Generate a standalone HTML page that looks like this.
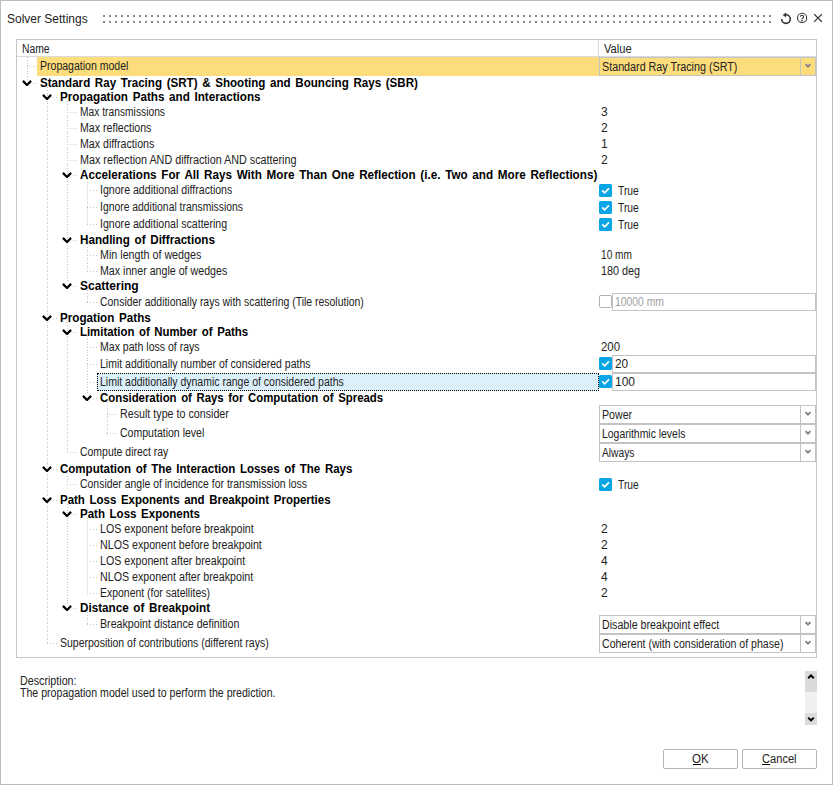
<!DOCTYPE html>
<html><head><meta charset="utf-8"><style>
html,body{margin:0;padding:0;}
body{width:833px;height:785px;position:relative;overflow:hidden;background:#fff;font-family:"Liberation Sans",sans-serif;font-size:12px;}
.tx{position:absolute;white-space:nowrap;line-height:16px;height:16px;transform-origin:0 0;}
.ab{position:absolute;}
.vd{position:absolute;width:1px;background-image:repeating-linear-gradient(to bottom,#c4c4c4 0,#c4c4c4 1px,transparent 1px,transparent 3px,#c4c4c4 3px,#c4c4c4 4px,transparent 4px,transparent 6px,#c4c4c4 6px,#c4c4c4 7px,transparent 7px,transparent 8px);}
.hd{position:absolute;height:1px;background-image:repeating-linear-gradient(to right,#c4c4c4 0,#c4c4c4 1px,transparent 1px,transparent 3px);}
.combo{position:absolute;box-sizing:border-box;border:1px solid #c3c3c3;background:#fff;}
.tb{position:absolute;box-sizing:border-box;border:1px solid #c3c3c3;background:#fff;}
.cb{position:absolute;width:13px;height:13px;box-sizing:border-box;border-radius:1.5px;}
.cbon{background:#0aa5e5;}
.cboff{border:1px solid #a9b0b8;background:#fff;}
.btn{position:absolute;box-sizing:border-box;border:1px solid #b4b4b4;border-radius:2px;background:#fff;}
</style></head><body>
<div class="ab" style="left:0;top:0;width:833px;height:785px;box-sizing:border-box;border:1px solid #bdbdbd;"></div>
<div class="tx" id="t0" style="left:7px;top:11px;color:#222;">Solver Settings</div>
<svg class="ab" style="left:0;top:0" width="833" height="40" fill="#8a8a8a"><rect x="103" y="15" width="2" height="2"/><rect x="103" y="21" width="2" height="2"/><rect x="109" y="15" width="2" height="2"/><rect x="109" y="21" width="2" height="2"/><rect x="115" y="15" width="2" height="2"/><rect x="115" y="21" width="2" height="2"/><rect x="121" y="15" width="2" height="2"/><rect x="121" y="21" width="2" height="2"/><rect x="127" y="15" width="2" height="2"/><rect x="127" y="21" width="2" height="2"/><rect x="133" y="15" width="2" height="2"/><rect x="133" y="21" width="2" height="2"/><rect x="139" y="15" width="2" height="2"/><rect x="139" y="21" width="2" height="2"/><rect x="145" y="15" width="2" height="2"/><rect x="145" y="21" width="2" height="2"/><rect x="151" y="15" width="2" height="2"/><rect x="151" y="21" width="2" height="2"/><rect x="157" y="15" width="2" height="2"/><rect x="157" y="21" width="2" height="2"/><rect x="163" y="15" width="2" height="2"/><rect x="163" y="21" width="2" height="2"/><rect x="169" y="15" width="2" height="2"/><rect x="169" y="21" width="2" height="2"/><rect x="175" y="15" width="2" height="2"/><rect x="175" y="21" width="2" height="2"/><rect x="181" y="15" width="2" height="2"/><rect x="181" y="21" width="2" height="2"/><rect x="187" y="15" width="2" height="2"/><rect x="187" y="21" width="2" height="2"/><rect x="193" y="15" width="2" height="2"/><rect x="193" y="21" width="2" height="2"/><rect x="199" y="15" width="2" height="2"/><rect x="199" y="21" width="2" height="2"/><rect x="205" y="15" width="2" height="2"/><rect x="205" y="21" width="2" height="2"/><rect x="211" y="15" width="2" height="2"/><rect x="211" y="21" width="2" height="2"/><rect x="217" y="15" width="2" height="2"/><rect x="217" y="21" width="2" height="2"/><rect x="223" y="15" width="2" height="2"/><rect x="223" y="21" width="2" height="2"/><rect x="229" y="15" width="2" height="2"/><rect x="229" y="21" width="2" height="2"/><rect x="235" y="15" width="2" height="2"/><rect x="235" y="21" width="2" height="2"/><rect x="241" y="15" width="2" height="2"/><rect x="241" y="21" width="2" height="2"/><rect x="247" y="15" width="2" height="2"/><rect x="247" y="21" width="2" height="2"/><rect x="253" y="15" width="2" height="2"/><rect x="253" y="21" width="2" height="2"/><rect x="259" y="15" width="2" height="2"/><rect x="259" y="21" width="2" height="2"/><rect x="265" y="15" width="2" height="2"/><rect x="265" y="21" width="2" height="2"/><rect x="271" y="15" width="2" height="2"/><rect x="271" y="21" width="2" height="2"/><rect x="277" y="15" width="2" height="2"/><rect x="277" y="21" width="2" height="2"/><rect x="283" y="15" width="2" height="2"/><rect x="283" y="21" width="2" height="2"/><rect x="289" y="15" width="2" height="2"/><rect x="289" y="21" width="2" height="2"/><rect x="295" y="15" width="2" height="2"/><rect x="295" y="21" width="2" height="2"/><rect x="301" y="15" width="2" height="2"/><rect x="301" y="21" width="2" height="2"/><rect x="307" y="15" width="2" height="2"/><rect x="307" y="21" width="2" height="2"/><rect x="313" y="15" width="2" height="2"/><rect x="313" y="21" width="2" height="2"/><rect x="319" y="15" width="2" height="2"/><rect x="319" y="21" width="2" height="2"/><rect x="325" y="15" width="2" height="2"/><rect x="325" y="21" width="2" height="2"/><rect x="331" y="15" width="2" height="2"/><rect x="331" y="21" width="2" height="2"/><rect x="337" y="15" width="2" height="2"/><rect x="337" y="21" width="2" height="2"/><rect x="343" y="15" width="2" height="2"/><rect x="343" y="21" width="2" height="2"/><rect x="349" y="15" width="2" height="2"/><rect x="349" y="21" width="2" height="2"/><rect x="355" y="15" width="2" height="2"/><rect x="355" y="21" width="2" height="2"/><rect x="361" y="15" width="2" height="2"/><rect x="361" y="21" width="2" height="2"/><rect x="367" y="15" width="2" height="2"/><rect x="367" y="21" width="2" height="2"/><rect x="373" y="15" width="2" height="2"/><rect x="373" y="21" width="2" height="2"/><rect x="379" y="15" width="2" height="2"/><rect x="379" y="21" width="2" height="2"/><rect x="385" y="15" width="2" height="2"/><rect x="385" y="21" width="2" height="2"/><rect x="391" y="15" width="2" height="2"/><rect x="391" y="21" width="2" height="2"/><rect x="397" y="15" width="2" height="2"/><rect x="397" y="21" width="2" height="2"/><rect x="403" y="15" width="2" height="2"/><rect x="403" y="21" width="2" height="2"/><rect x="409" y="15" width="2" height="2"/><rect x="409" y="21" width="2" height="2"/><rect x="415" y="15" width="2" height="2"/><rect x="415" y="21" width="2" height="2"/><rect x="421" y="15" width="2" height="2"/><rect x="421" y="21" width="2" height="2"/><rect x="427" y="15" width="2" height="2"/><rect x="427" y="21" width="2" height="2"/><rect x="433" y="15" width="2" height="2"/><rect x="433" y="21" width="2" height="2"/><rect x="439" y="15" width="2" height="2"/><rect x="439" y="21" width="2" height="2"/><rect x="445" y="15" width="2" height="2"/><rect x="445" y="21" width="2" height="2"/><rect x="451" y="15" width="2" height="2"/><rect x="451" y="21" width="2" height="2"/><rect x="457" y="15" width="2" height="2"/><rect x="457" y="21" width="2" height="2"/><rect x="463" y="15" width="2" height="2"/><rect x="463" y="21" width="2" height="2"/><rect x="469" y="15" width="2" height="2"/><rect x="469" y="21" width="2" height="2"/><rect x="475" y="15" width="2" height="2"/><rect x="475" y="21" width="2" height="2"/><rect x="481" y="15" width="2" height="2"/><rect x="481" y="21" width="2" height="2"/><rect x="487" y="15" width="2" height="2"/><rect x="487" y="21" width="2" height="2"/><rect x="493" y="15" width="2" height="2"/><rect x="493" y="21" width="2" height="2"/><rect x="499" y="15" width="2" height="2"/><rect x="499" y="21" width="2" height="2"/><rect x="505" y="15" width="2" height="2"/><rect x="505" y="21" width="2" height="2"/><rect x="511" y="15" width="2" height="2"/><rect x="511" y="21" width="2" height="2"/><rect x="517" y="15" width="2" height="2"/><rect x="517" y="21" width="2" height="2"/><rect x="523" y="15" width="2" height="2"/><rect x="523" y="21" width="2" height="2"/><rect x="529" y="15" width="2" height="2"/><rect x="529" y="21" width="2" height="2"/><rect x="535" y="15" width="2" height="2"/><rect x="535" y="21" width="2" height="2"/><rect x="541" y="15" width="2" height="2"/><rect x="541" y="21" width="2" height="2"/><rect x="547" y="15" width="2" height="2"/><rect x="547" y="21" width="2" height="2"/><rect x="553" y="15" width="2" height="2"/><rect x="553" y="21" width="2" height="2"/><rect x="559" y="15" width="2" height="2"/><rect x="559" y="21" width="2" height="2"/><rect x="565" y="15" width="2" height="2"/><rect x="565" y="21" width="2" height="2"/><rect x="571" y="15" width="2" height="2"/><rect x="571" y="21" width="2" height="2"/><rect x="577" y="15" width="2" height="2"/><rect x="577" y="21" width="2" height="2"/><rect x="583" y="15" width="2" height="2"/><rect x="583" y="21" width="2" height="2"/><rect x="589" y="15" width="2" height="2"/><rect x="589" y="21" width="2" height="2"/><rect x="595" y="15" width="2" height="2"/><rect x="595" y="21" width="2" height="2"/><rect x="601" y="15" width="2" height="2"/><rect x="601" y="21" width="2" height="2"/><rect x="607" y="15" width="2" height="2"/><rect x="607" y="21" width="2" height="2"/><rect x="613" y="15" width="2" height="2"/><rect x="613" y="21" width="2" height="2"/><rect x="619" y="15" width="2" height="2"/><rect x="619" y="21" width="2" height="2"/><rect x="625" y="15" width="2" height="2"/><rect x="625" y="21" width="2" height="2"/><rect x="631" y="15" width="2" height="2"/><rect x="631" y="21" width="2" height="2"/><rect x="637" y="15" width="2" height="2"/><rect x="637" y="21" width="2" height="2"/><rect x="643" y="15" width="2" height="2"/><rect x="643" y="21" width="2" height="2"/><rect x="649" y="15" width="2" height="2"/><rect x="649" y="21" width="2" height="2"/><rect x="655" y="15" width="2" height="2"/><rect x="655" y="21" width="2" height="2"/><rect x="661" y="15" width="2" height="2"/><rect x="661" y="21" width="2" height="2"/><rect x="667" y="15" width="2" height="2"/><rect x="667" y="21" width="2" height="2"/><rect x="673" y="15" width="2" height="2"/><rect x="673" y="21" width="2" height="2"/><rect x="679" y="15" width="2" height="2"/><rect x="679" y="21" width="2" height="2"/><rect x="685" y="15" width="2" height="2"/><rect x="685" y="21" width="2" height="2"/><rect x="691" y="15" width="2" height="2"/><rect x="691" y="21" width="2" height="2"/><rect x="697" y="15" width="2" height="2"/><rect x="697" y="21" width="2" height="2"/><rect x="703" y="15" width="2" height="2"/><rect x="703" y="21" width="2" height="2"/><rect x="709" y="15" width="2" height="2"/><rect x="709" y="21" width="2" height="2"/><rect x="715" y="15" width="2" height="2"/><rect x="715" y="21" width="2" height="2"/><rect x="721" y="15" width="2" height="2"/><rect x="721" y="21" width="2" height="2"/><rect x="727" y="15" width="2" height="2"/><rect x="727" y="21" width="2" height="2"/><rect x="733" y="15" width="2" height="2"/><rect x="733" y="21" width="2" height="2"/><rect x="739" y="15" width="2" height="2"/><rect x="739" y="21" width="2" height="2"/><rect x="745" y="15" width="2" height="2"/><rect x="745" y="21" width="2" height="2"/><rect x="751" y="15" width="2" height="2"/><rect x="751" y="21" width="2" height="2"/><rect x="757" y="15" width="2" height="2"/><rect x="757" y="21" width="2" height="2"/><rect x="763" y="15" width="2" height="2"/><rect x="763" y="21" width="2" height="2"/><rect x="769" y="15" width="2" height="2"/><rect x="769" y="21" width="2" height="2"/></svg>
<svg class="ab" style="left:776px;top:8px" width="52" height="22" viewBox="0 0 52 22">
<path d="M10 6.8 A4.3 4.3 0 1 1 5.7 11.1" fill="none" stroke="#333" stroke-width="1.6"/>
<path d="M6.6 6.9 L10.1 4.4 L10.1 9.3 Z" fill="#333"/>
<circle cx="26.1" cy="9.9" r="4.6" fill="none" stroke="#333" stroke-width="1.05"/>
<path d="M24.3 8.6 Q24.5 7.3 25.9 7.3 Q27.6 7.3 27.6 8.8 Q27.6 9.8 26.4 10.4 Q26 10.7 26 11.2" fill="none" stroke="#333" stroke-width="1.1"/>
<rect x="25.2" y="12.1" width="1.7" height="1.1" fill="#333"/>
<path d="M38.5 6.5 L45.5 13.5 M45.5 6.5 L38.5 13.5" stroke="#333" stroke-width="1.15" stroke-linecap="square"/>
</svg>
<div class="ab" style="left:16px;top:39px;width:801px;height:619px;box-sizing:border-box;border:1px solid #c6c6c6;"></div>
<div class="ab" style="left:17px;top:56px;width:799px;height:1px;background:#dadada;"></div>
<div class="ab" style="left:598px;top:40px;width:1px;height:16px;background:#dadada;"></div>
<div class="tx" id="t1" style="left:22px;top:41px;transform:scaleX(0.8586);color:#222;">Name</div>
<div class="tx" id="t2" style="left:604px;top:41px;transform:scaleX(0.9254);color:#222;">Value</div>
<div class="vd" style="left:27px;top:57px;height:23px;"></div>
<div class="vd" style="left:47px;top:87px;height:557px;"></div>
<div class="vd" style="left:67px;top:101px;height:182px;"></div>
<div class="vd" style="left:87px;top:179px;height:46px;"></div>
<div class="vd" style="left:87px;top:244px;height:28px;"></div>
<div class="vd" style="left:87px;top:290px;height:13px;"></div>
<div class="vd" style="left:67px;top:322px;height:131px;"></div>
<div class="vd" style="left:87px;top:336px;height:59px;"></div>
<div class="vd" style="left:107px;top:402px;height:32px;"></div>
<div class="vd" style="left:67px;top:473px;height:12px;"></div>
<div class="vd" style="left:67px;top:504px;height:101px;"></div>
<div class="vd" style="left:87px;top:518px;height:76px;"></div>
<div class="vd" style="left:87px;top:612px;height:13px;"></div>
<div class="hd" style="left:27px;top:66px;width:10px;"></div>
<div class="ab" style="left:37px;top:57px;width:779px;height:19px;background:#fddc7c;"></div>
<div class="tx" id="t3" style="left:40px;top:58px;transform:scaleX(0.8777);color:#222;">Propagation model</div>
<div class="combo" style="left:599px;top:57px;width:217px;height:19px;background:#fddc7c;"></div>
<div class="ab" style="left:800px;top:58px;width:1px;height:17px;background:#c3c3c3;"></div>
<svg class="ab" style="left:804px;top:63px" width="8" height="6"><path d="M1.5 1.2 L4 3.7 L6.5 1.2" fill="none" stroke="#808080" stroke-width="1.8"/></svg>
<div class="tx" id="t4" style="left:602px;top:59px;transform:scaleX(0.8953);color:#222;">Standard Ray Tracing (SRT)</div>
<svg class="ab" style="left:22px;top:80px" width="10" height="6"><path d="M0.9 0.9 L5 5 L9.1 0.9" fill="none" stroke="#000" stroke-width="2.2"/></svg>
<div class="hd" style="left:33px;top:83px;width:4px;"></div>
<div class="tx" id="t5" style="left:40px;top:75px;font-weight:bold;transform:scaleX(0.9653);word-spacing:1.5px;color:#000;">Standard Ray Tracing (SRT) &amp; Shooting and Bouncing Rays (SBR)</div>
<svg class="ab" style="left:42px;top:94px" width="10" height="6"><path d="M0.9 0.9 L5 5 L9.1 0.9" fill="none" stroke="#000" stroke-width="2.2"/></svg>
<div class="hd" style="left:53px;top:97px;width:4px;"></div>
<div class="tx" id="t6" style="left:60px;top:89px;font-weight:bold;transform:scaleX(0.9711);word-spacing:1.5px;color:#000;">Propagation Paths and Interactions</div>
<div class="hd" style="left:67px;top:112px;width:10px;"></div>
<div class="tx" id="t7" style="left:80px;top:104px;transform:scaleX(0.8553);color:#222;">Max transmissions</div>
<div class="tx" id="t8" style="left:601px;top:104px;color:#222;">3</div>
<div class="hd" style="left:67px;top:128px;width:10px;"></div>
<div class="tx" id="t9" style="left:80px;top:120px;transform:scaleX(0.8851);color:#222;">Max reflections</div>
<div class="tx" id="t10" style="left:601px;top:120px;color:#222;">2</div>
<div class="hd" style="left:67px;top:144px;width:10px;"></div>
<div class="tx" id="t11" style="left:80px;top:136px;transform:scaleX(0.8869);color:#222;">Max diffractions</div>
<div class="tx" id="t12" style="left:601px;top:136px;color:#222;">1</div>
<div class="hd" style="left:67px;top:160px;width:10px;"></div>
<div class="tx" id="t13" style="left:80px;top:152px;transform:scaleX(0.8973);color:#222;">Max reflection AND diffraction AND scattering</div>
<div class="tx" id="t14" style="left:601px;top:152px;color:#222;">2</div>
<svg class="ab" style="left:62px;top:172px" width="10" height="6"><path d="M0.9 0.9 L5 5 L9.1 0.9" fill="none" stroke="#000" stroke-width="2.2"/></svg>
<div class="hd" style="left:73px;top:175px;width:4px;"></div>
<div class="tx" id="t15" style="left:80px;top:167px;font-weight:bold;transform:scaleX(0.9733);word-spacing:1.5px;color:#000;">Accelerations For All Rays With More Than One Reflection (i.e. Two and More Reflections)</div>
<div class="hd" style="left:87px;top:190px;width:10px;"></div>
<div class="tx" id="t16" style="left:100px;top:182px;transform:scaleX(0.8828);color:#222;">Ignore additional diffractions</div>
<div class="cb cbon" style="left:599px;top:184px;"><svg width="13" height="13" style="position:absolute;left:0;top:0"><path d="M3.2 6.4 L5.6 8.8 L10 4.4" fill="none" stroke="#fff" stroke-width="1.7"/></svg></div>
<div class="tx" id="t17" style="left:618px;top:183px;transform:scaleX(0.8577);color:#222;">True</div>
<div class="hd" style="left:87px;top:207px;width:10px;"></div>
<div class="tx" id="t18" style="left:100px;top:199px;transform:scaleX(0.8644);color:#222;">Ignore additional transmissions</div>
<div class="cb cbon" style="left:599px;top:201px;"><svg width="13" height="13" style="position:absolute;left:0;top:0"><path d="M3.2 6.4 L5.6 8.8 L10 4.4" fill="none" stroke="#fff" stroke-width="1.7"/></svg></div>
<div class="tx" id="t19" style="left:618px;top:200px;transform:scaleX(0.8577);color:#222;">True</div>
<div class="hd" style="left:87px;top:224px;width:10px;"></div>
<div class="tx" id="t20" style="left:100px;top:216px;transform:scaleX(0.8822);color:#222;">Ignore additional scattering</div>
<div class="cb cbon" style="left:599px;top:218px;"><svg width="13" height="13" style="position:absolute;left:0;top:0"><path d="M3.2 6.4 L5.6 8.8 L10 4.4" fill="none" stroke="#fff" stroke-width="1.7"/></svg></div>
<div class="tx" id="t21" style="left:618px;top:217px;transform:scaleX(0.8577);color:#222;">True</div>
<svg class="ab" style="left:62px;top:237px" width="10" height="6"><path d="M0.9 0.9 L5 5 L9.1 0.9" fill="none" stroke="#000" stroke-width="2.2"/></svg>
<div class="hd" style="left:73px;top:240px;width:4px;"></div>
<div class="tx" id="t22" style="left:80px;top:232px;font-weight:bold;transform:scaleX(0.9709);word-spacing:1.5px;color:#000;">Handling of Diffractions</div>
<div class="hd" style="left:87px;top:255px;width:10px;"></div>
<div class="tx" id="t23" style="left:100px;top:247px;transform:scaleX(0.8936);color:#222;">Min length of wedges</div>
<div class="tx" id="t24" style="left:601px;top:247px;transform:scaleX(0.8440);color:#222;">10 mm</div>
<div class="hd" style="left:87px;top:271px;width:10px;"></div>
<div class="tx" id="t25" style="left:100px;top:263px;transform:scaleX(0.8871);color:#222;">Max inner angle of wedges</div>
<div class="tx" id="t26" style="left:601px;top:263px;transform:scaleX(0.9023);color:#222;">180 deg</div>
<svg class="ab" style="left:62px;top:283px" width="10" height="6"><path d="M0.9 0.9 L5 5 L9.1 0.9" fill="none" stroke="#000" stroke-width="2.2"/></svg>
<div class="hd" style="left:73px;top:286px;width:4px;"></div>
<div class="tx" id="t27" style="left:80px;top:278px;font-weight:bold;transform:scaleX(1.0002);word-spacing:1.5px;color:#000;">Scattering</div>
<div class="hd" style="left:87px;top:302px;width:10px;"></div>
<div class="tx" id="t28" style="left:100px;top:294px;transform:scaleX(0.8706);color:#222;">Consider additionally rays with scattering (Tile resolution)</div>
<div class="tb" style="left:612px;top:293px;width:204px;height:18px;"></div>
<div class="cb cboff" style="left:599px;top:295px;"></div>
<div class="tx" id="t29" style="left:615px;top:294px;transform:scaleX(0.8641);color:#a0a0a0;">10000 mm</div>
<svg class="ab" style="left:42px;top:315px" width="10" height="6"><path d="M0.9 0.9 L5 5 L9.1 0.9" fill="none" stroke="#000" stroke-width="2.2"/></svg>
<div class="hd" style="left:53px;top:318px;width:4px;"></div>
<div class="tx" id="t30" style="left:60px;top:310px;font-weight:bold;transform:scaleX(0.9705);word-spacing:1.5px;color:#000;">Progation Paths</div>
<svg class="ab" style="left:62px;top:329px" width="10" height="6"><path d="M0.9 0.9 L5 5 L9.1 0.9" fill="none" stroke="#000" stroke-width="2.2"/></svg>
<div class="hd" style="left:73px;top:332px;width:4px;"></div>
<div class="tx" id="t31" style="left:80px;top:324px;font-weight:bold;transform:scaleX(0.9480);word-spacing:1.5px;color:#000;">Limitation of Number of Paths</div>
<div class="hd" style="left:87px;top:347px;width:10px;"></div>
<div class="tx" id="t32" style="left:100px;top:339px;transform:scaleX(0.8785);color:#222;">Max path loss of rays</div>
<div class="tx" id="t33" style="left:601px;top:339px;transform:scaleX(0.9551);color:#222;">200</div>
<div class="hd" style="left:87px;top:364px;width:10px;"></div>
<div class="tx" id="t34" style="left:100px;top:356px;transform:scaleX(0.8742);color:#222;">Limit additionally number of considered paths</div>
<div class="tb" style="left:612px;top:355px;width:204px;height:18px;"></div>
<div class="cb cbon" style="left:599px;top:357px;"><svg width="13" height="13" style="position:absolute;left:0;top:0"><path d="M3.2 6.4 L5.6 8.8 L10 4.4" fill="none" stroke="#fff" stroke-width="1.7"/></svg></div>
<div class="tx" id="t35" style="left:615px;top:356px;transform:scaleX(0.9866);color:#222;">20</div>
<div class="hd" style="left:87px;top:382px;width:10px;"></div>
<div class="ab" style="left:97px;top:373px;width:502px;height:18px;box-sizing:border-box;background:#dcf0fb;border:1px dotted #000;"></div>
<div class="tx" id="t36" style="left:100px;top:374px;transform:scaleX(0.8741);color:#222;">Limit additionally dynamic range of considered paths</div>
<div class="tb" style="left:612px;top:373px;width:204px;height:18px;"></div>
<div class="cb cbon" style="left:599px;top:375px;"><svg width="13" height="13" style="position:absolute;left:0;top:0"><path d="M3.2 6.4 L5.6 8.8 L10 4.4" fill="none" stroke="#fff" stroke-width="1.7"/></svg></div>
<div class="tx" id="t37" style="left:615px;top:374px;color:#222;">100</div>
<svg class="ab" style="left:82px;top:395px" width="10" height="6"><path d="M0.9 0.9 L5 5 L9.1 0.9" fill="none" stroke="#000" stroke-width="2.2"/></svg>
<div class="hd" style="left:93px;top:398px;width:4px;"></div>
<div class="tx" id="t38" style="left:100px;top:390px;font-weight:bold;transform:scaleX(0.9489);word-spacing:1.5px;color:#000;">Consideration of Rays for Computation of Spreads</div>
<div class="hd" style="left:107px;top:414px;width:10px;"></div>
<div class="tx" id="t39" style="left:120px;top:406px;transform:scaleX(0.8917);color:#222;">Result type to consider</div>
<div class="combo" style="left:599px;top:405px;width:217px;height:19px;background:#fff;"></div>
<div class="ab" style="left:800px;top:406px;width:1px;height:17px;background:#c3c3c3;"></div>
<svg class="ab" style="left:804px;top:411px" width="8" height="6"><path d="M1.5 1.2 L4 3.7 L6.5 1.2" fill="none" stroke="#808080" stroke-width="1.8"/></svg>
<div class="tx" id="t40" style="left:602px;top:407px;transform:scaleX(0.8857);color:#222;">Power</div>
<div class="hd" style="left:107px;top:433px;width:10px;"></div>
<div class="tx" id="t41" style="left:120px;top:425px;transform:scaleX(0.8777);color:#222;">Computation level</div>
<div class="combo" style="left:599px;top:424px;width:217px;height:19px;background:#fff;"></div>
<div class="ab" style="left:800px;top:425px;width:1px;height:17px;background:#c3c3c3;"></div>
<svg class="ab" style="left:804px;top:430px" width="8" height="6"><path d="M1.5 1.2 L4 3.7 L6.5 1.2" fill="none" stroke="#808080" stroke-width="1.8"/></svg>
<div class="tx" id="t42" style="left:602px;top:426px;transform:scaleX(0.8684);color:#222;">Logarithmic levels</div>
<div class="hd" style="left:67px;top:452px;width:10px;"></div>
<div class="tx" id="t43" style="left:80px;top:444px;transform:scaleX(0.8711);color:#222;">Compute direct ray</div>
<div class="combo" style="left:599px;top:443px;width:217px;height:19px;background:#fff;"></div>
<div class="ab" style="left:800px;top:444px;width:1px;height:17px;background:#c3c3c3;"></div>
<svg class="ab" style="left:804px;top:449px" width="8" height="6"><path d="M1.5 1.2 L4 3.7 L6.5 1.2" fill="none" stroke="#808080" stroke-width="1.8"/></svg>
<div class="tx" id="t44" style="left:602px;top:445px;transform:scaleX(0.8517);color:#222;">Always</div>
<svg class="ab" style="left:42px;top:466px" width="10" height="6"><path d="M0.9 0.9 L5 5 L9.1 0.9" fill="none" stroke="#000" stroke-width="2.2"/></svg>
<div class="hd" style="left:53px;top:469px;width:4px;"></div>
<div class="tx" id="t45" style="left:60px;top:461px;font-weight:bold;transform:scaleX(0.9603);word-spacing:1.5px;color:#000;">Computation of The Interaction Losses of The Rays</div>
<div class="hd" style="left:67px;top:484px;width:10px;"></div>
<div class="tx" id="t46" style="left:80px;top:476px;transform:scaleX(0.8704);color:#222;">Consider angle of incidence for transmission loss</div>
<div class="cb cbon" style="left:599px;top:478px;"><svg width="13" height="13" style="position:absolute;left:0;top:0"><path d="M3.2 6.4 L5.6 8.8 L10 4.4" fill="none" stroke="#fff" stroke-width="1.7"/></svg></div>
<div class="tx" id="t47" style="left:618px;top:477px;transform:scaleX(0.8577);color:#222;">True</div>
<svg class="ab" style="left:42px;top:497px" width="10" height="6"><path d="M0.9 0.9 L5 5 L9.1 0.9" fill="none" stroke="#000" stroke-width="2.2"/></svg>
<div class="hd" style="left:53px;top:500px;width:4px;"></div>
<div class="tx" id="t48" style="left:60px;top:492px;font-weight:bold;transform:scaleX(0.9563);word-spacing:1.5px;color:#000;">Path Loss Exponents and Breakpoint Properties</div>
<svg class="ab" style="left:62px;top:511px" width="10" height="6"><path d="M0.9 0.9 L5 5 L9.1 0.9" fill="none" stroke="#000" stroke-width="2.2"/></svg>
<div class="hd" style="left:73px;top:514px;width:4px;"></div>
<div class="tx" id="t49" style="left:80px;top:506px;font-weight:bold;transform:scaleX(0.9593);word-spacing:1.5px;color:#000;">Path Loss Exponents</div>
<div class="hd" style="left:87px;top:529px;width:10px;"></div>
<div class="tx" id="t50" style="left:100px;top:521px;transform:scaleX(0.8862);color:#222;">LOS exponent before breakpoint</div>
<div class="tx" id="t51" style="left:601px;top:521px;color:#222;">2</div>
<div class="hd" style="left:87px;top:545px;width:10px;"></div>
<div class="tx" id="t52" style="left:100px;top:537px;transform:scaleX(0.8886);color:#222;">NLOS exponent before breakpoint</div>
<div class="tx" id="t53" style="left:601px;top:537px;color:#222;">2</div>
<div class="hd" style="left:87px;top:561px;width:10px;"></div>
<div class="tx" id="t54" style="left:100px;top:553px;transform:scaleX(0.8879);color:#222;">LOS exponent after breakpoint</div>
<div class="tx" id="t55" style="left:601px;top:553px;color:#222;">4</div>
<div class="hd" style="left:87px;top:577px;width:10px;"></div>
<div class="tx" id="t56" style="left:100px;top:569px;transform:scaleX(0.8903);color:#222;">NLOS exponent after breakpoint</div>
<div class="tx" id="t57" style="left:601px;top:569px;color:#222;">4</div>
<div class="hd" style="left:87px;top:593px;width:10px;"></div>
<div class="tx" id="t58" style="left:100px;top:585px;transform:scaleX(0.8719);color:#222;">Exponent (for satellites)</div>
<div class="tx" id="t59" style="left:601px;top:585px;color:#222;">2</div>
<svg class="ab" style="left:62px;top:605px" width="10" height="6"><path d="M0.9 0.9 L5 5 L9.1 0.9" fill="none" stroke="#000" stroke-width="2.2"/></svg>
<div class="hd" style="left:73px;top:608px;width:4px;"></div>
<div class="tx" id="t60" style="left:80px;top:600px;font-weight:bold;transform:scaleX(0.9727);word-spacing:1.5px;color:#000;">Distance of Breakpoint</div>
<div class="hd" style="left:87px;top:624px;width:10px;"></div>
<div class="tx" id="t61" style="left:100px;top:616px;transform:scaleX(0.8887);color:#222;">Breakpoint distance definition</div>
<div class="combo" style="left:599px;top:615px;width:217px;height:19px;background:#fff;"></div>
<div class="ab" style="left:800px;top:616px;width:1px;height:17px;background:#c3c3c3;"></div>
<svg class="ab" style="left:804px;top:621px" width="8" height="6"><path d="M1.5 1.2 L4 3.7 L6.5 1.2" fill="none" stroke="#808080" stroke-width="1.8"/></svg>
<div class="tx" id="t62" style="left:602px;top:617px;transform:scaleX(0.8891);color:#222;">Disable breakpoint effect</div>
<div class="hd" style="left:47px;top:643px;width:10px;"></div>
<div class="tx" id="t63" style="left:60px;top:635px;transform:scaleX(0.8748);color:#222;">Superposition of contributions (different rays)</div>
<div class="combo" style="left:599px;top:634px;width:217px;height:19px;background:#fff;"></div>
<div class="ab" style="left:800px;top:635px;width:1px;height:17px;background:#c3c3c3;"></div>
<svg class="ab" style="left:804px;top:640px" width="8" height="6"><path d="M1.5 1.2 L4 3.7 L6.5 1.2" fill="none" stroke="#808080" stroke-width="1.8"/></svg>
<div class="tx" id="t64" style="left:602px;top:636px;transform:scaleX(0.8801);color:#222;">Coherent (with consideration of phase)</div>
<div class="tx" id="t65" style="left:20px;top:673px;transform:scaleX(0.8923);color:#222;">Description:</div>
<div class="tx" id="t66" style="left:20px;top:685px;transform:scaleX(0.8826);color:#222;">The propagation model used to perform the prediction.</div>
<div class="ab" style="left:805px;top:671px;width:12px;height:21px;background:#dadada;"></div>
<div class="ab" style="left:805px;top:692px;width:12px;height:21px;background:#f0f0f0;"></div>
<div class="ab" style="left:805px;top:713px;width:12px;height:12px;background:#dadada;"></div>
<svg class="ab" style="left:805px;top:671px" width="12" height="12"><path d="M3.2 7.2 L6 4.4 L8.8 7.2" fill="none" stroke="#000" stroke-width="2"/></svg>
<svg class="ab" style="left:805px;top:713px" width="12" height="12"><path d="M3.2 4.6 L6 7.4 L8.8 4.6" fill="none" stroke="#000" stroke-width="2"/></svg>
<div class="btn" style="left:663px;top:749px;width:75px;height:20px;"></div>
<div class="btn" style="left:742px;top:749px;width:75px;height:20px;"></div>
<div class="tx" id="t67" style="left:692px;top:751px;transform:scaleX(0.9594);color:#222;">OK</div>
<div class="ab" style="left:693px;top:764px;width:8px;height:1px;background:#000;"></div>
<div class="tx" id="t68" style="left:762px;top:751px;transform:scaleX(0.9258);color:#222;">Cancel</div>
<div class="ab" style="left:762px;top:764px;width:8px;height:1px;background:#000;"></div>
</body></html>
